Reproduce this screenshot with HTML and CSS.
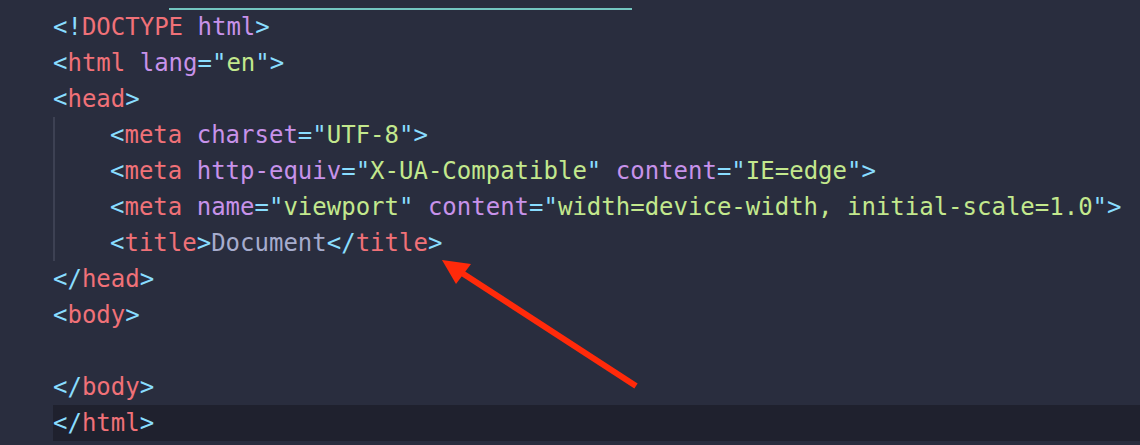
FILE: index.html
```html
<!DOCTYPE html>
<html lang="en">
<head>
<meta charset="UTF-8">
<title>Editor</title>
<link rel="stylesheet" href="styles.css">
</head>
<body>
<div class="editor">
  <div class="tab-indicator"></div>
  <div class="code">
    <div class="line"><span class="p">&lt;!</span><span class="t">DOCTYPE</span> <span class="a">html</span><span class="p">&gt;</span></div>
    <div class="line"><span class="p">&lt;</span><span class="t">html</span> <span class="a">lang</span><span class="p">="</span><span class="s">en</span><span class="p">"&gt;</span></div>
    <div class="line"><span class="p">&lt;</span><span class="t">head</span><span class="p">&gt;</span></div>
    <div class="block">
      <div class="line"><span class="p">&lt;</span><span class="t">meta</span> <span class="a">charset</span><span class="p">="</span><span class="s">UTF-8</span><span class="p">"&gt;</span></div>
      <div class="line"><span class="p">&lt;</span><span class="t">meta</span> <span class="a">http-equiv</span><span class="p">="</span><span class="s">X-UA-Compatible</span><span class="p">"</span> <span class="a">content</span><span class="p">="</span><span class="s">IE=edge</span><span class="p">"&gt;</span></div>
      <div class="line"><span class="p">&lt;</span><span class="t">meta</span> <span class="a">name</span><span class="p">="</span><span class="s">viewport</span><span class="p">"</span> <span class="a">content</span><span class="p">="</span><span class="s">width=device-width, initial-scale=1.0</span><span class="p">"&gt;</span></div>
      <div class="line"><span class="p">&lt;</span><span class="t">title</span><span class="p">&gt;</span><span class="x">Document</span><span class="p">&lt;/</span><span class="t">title</span><span class="p">&gt;</span></div>
    </div>
    <div class="line"><span class="p">&lt;/</span><span class="t">head</span><span class="p">&gt;</span></div>
    <div class="line"><span class="p">&lt;</span><span class="t">body</span><span class="p">&gt;</span></div>
    <div class="line"> </div>
    <div class="line"><span class="p">&lt;/</span><span class="t">body</span><span class="p">&gt;</span></div>
    <div class="line current"><span class="p">&lt;/</span><span class="t">html</span><span class="p">&gt;</span></div>
  </div>
  <svg class="arrow" width="1140" height="445" viewBox="0 0 1140 445">
    <line x1="636" y1="386" x2="462" y2="273" stroke="#ff2a0a" stroke-width="6"/>
    <polygon points="442,260 471,264 456,284" fill="#ff2a0a"/>
  </svg>
</div>
</body>
</html>
```
FILE: styles.css
```css
html, body {
  margin: 0;
  padding: 0;
  background: #292d3e;
}
.editor {
  position: relative;
  width: 1140px;
  height: 445px;
  overflow: hidden;
  background: #292d3e;
  font-family: "DejaVu Sans Mono", "Liberation Mono", monospace;
  font-size: 24px;
  line-height: 36px;
}
.tab-indicator {
  margin: 8px 0 0 169px;
  width: 463px;
  height: 2px;
  background: #73c5c0;
}
.code {
  padding-left: 53px;
  margin-top: -1px;
}
.line {
  height: 36px;
  white-space: pre;
  color: #a6accd;
}
.block {
  border-left: 2px solid #3d4153;
  padding-left: 55px;
  margin-left: 0;
}
.current {
  background: #1f212e;
}
.p { color: #89ddff; }
.t { color: #f07178; }
.a { color: #c792ea; }
.s { color: #c3e88d; }
.x { color: #a6accd; }
.arrow {
  position: absolute;
  left: 0;
  top: 0;
}
```
